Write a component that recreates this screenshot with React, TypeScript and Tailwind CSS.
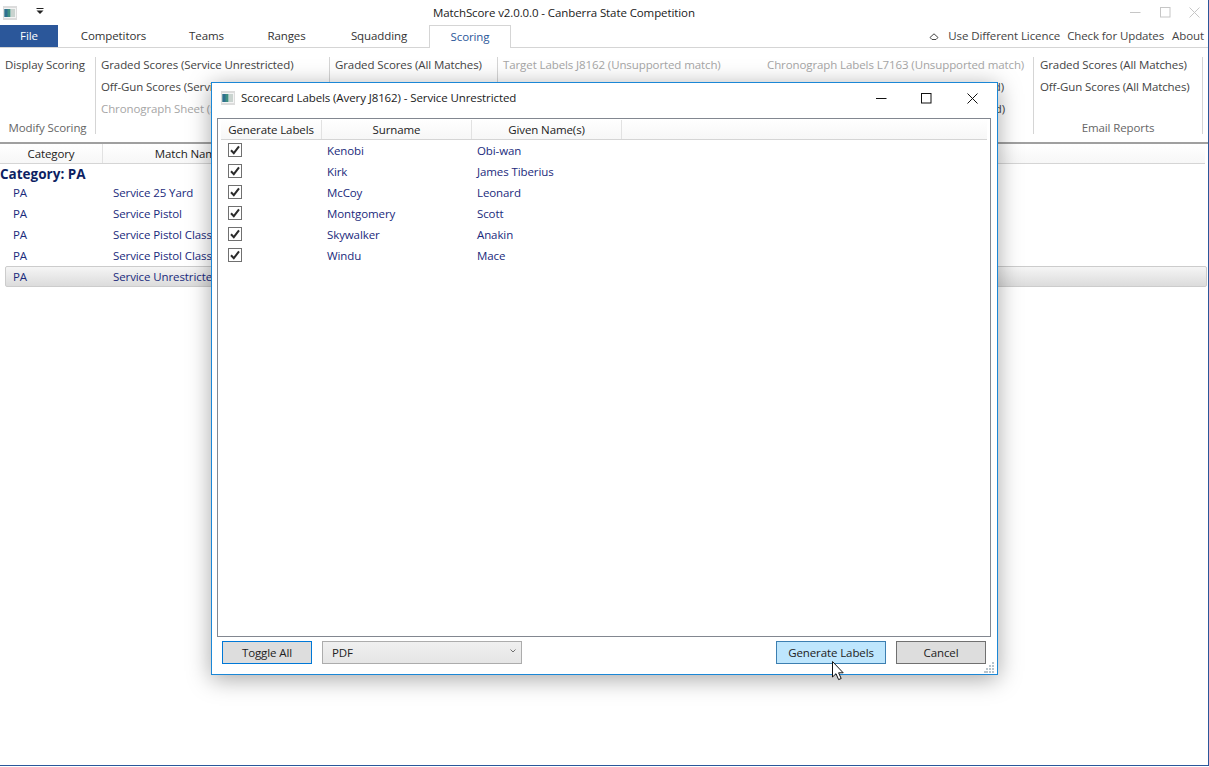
// App.tsx
const font = "font-['Open_Sans','Liberation_Sans',sans-serif]";

const matches = [
  "Service 25 Yard",
  "Service Pistol",
  "Service Pistol Class 1",
  "Service Pistol Class 2",
  "Service Unrestricted",
];

const people = [
  ["Kenobi", "Obi-wan"],
  ["Kirk", "James Tiberius"],
  ["McCoy", "Leonard"],
  ["Montgomery", "Scott"],
  ["Skywalker", "Anakin"],
  ["Windu", "Mace"],
];

function AppIcon() {
  return (
    <svg width="14" height="14" viewBox="0 0 14 14" className="shrink-0">
      <rect width="14" height="14" fill="#dcdcdc" />
      <rect x="1" y="2" width="12" height="10" fill="#f4f4f4" />
      <rect x="1.5" y="3" width="6" height="8" fill="#3f8f82" />
      <rect x="1.5" y="3" width="3" height="8" fill="#2f6f8f" />
      <rect x="8" y="3" width="4" height="8" fill="#c9d3cf" />
    </svg>
  );
}

function RibbonRow({ children, off }: { children: React.ReactNode; off?: boolean }) {
  return (
    <div className={`h-[22px] flex items-center whitespace-nowrap ${off ? "text-[#a6a6a6]" : "text-[#444444]"}`}>
      {children}
    </div>
  );
}

function Check() {
  return (
    <div className="w-[14px] h-[14px] border border-[#707070] bg-white flex items-center justify-center">
      <svg width="12" height="12" viewBox="0 0 12 12">
        <path d="M2 6.2 L4.8 9.2 L10 2.4" fill="none" stroke="#2b2b2b" strokeWidth="2" />
      </svg>
    </div>
  );
}

function WinButton({ kind, color }: { kind: "min" | "max" | "close"; color: string }) {
  return (
    <svg width="11" height="11" viewBox="0 0 11 11" className="shrink-0">
      {kind === "min" && <path d="M0 5.5H10.5" stroke={color} strokeWidth="1" />}
      {kind === "max" && <rect x="0.5" y="0.5" width="9.5" height="9.5" fill="none" stroke={color} />}
      {kind === "close" && <path d="M0.5 0.5L10.5 10.5M10.5 0.5L0.5 10.5" stroke={color} strokeWidth="1" />}
    </svg>
  );
}

function Dialog() {
  return (
    <div className="absolute left-[211px] top-[82px] w-[787px] h-[593px] bg-white border border-[#1b87d6] shadow-[0_4px_22px_rgba(0,0,0,0.35)] flex flex-col text-[#1f1f1f]">
      <div className="h-[35px] shrink-0 flex items-center pl-[9px] pb-[5px] text-[#1a1a1a]">
        <AppIcon />
        <span className="ml-[6px] whitespace-nowrap">Scorecard Labels (Avery J8162) - Service Unrestricted</span>
        <div className="ml-auto flex items-center">
          <WinButton kind="min" color="#111" />
          <div className="w-[34px]" />
          <WinButton kind="max" color="#111" />
          <div className="w-[35px]" />
          <WinButton kind="close" color="#111" />
          <div className="w-[19px]" />
        </div>
      </div>

      <div className="mx-[5px] mr-[6px] h-[519px] shrink-0 border border-[#828790] px-[3px] pr-[3px]">
        <div className="h-[21px] pt-px flex border-b border-[#d5d5d5] bg-gradient-to-b from-white to-[#f7f7f7] text-[#222222]">
          <div className="w-[101px] border-r border-[#e2e2e2] flex items-center justify-center">Generate Labels</div>
          <div className="w-[150px] border-r border-[#e2e2e2] flex items-center justify-center">Surname</div>
          <div className="w-[150px] border-r border-[#e2e2e2] flex items-center justify-center">Given Name(s)</div>
        </div>
        {people.map(([surname, given]) => (
          <div key={surname} className="h-[21px] flex items-center text-[#1a2a7c]">
            <div className="w-[101px] pl-[7px] -mt-[2px]">
              <Check />
            </div>
            <div className="w-[150px] pl-[5px]">{surname}</div>
            <div className="w-[150px] pl-[5px]">{given}</div>
          </div>
        ))}
      </div>

      <div className="mt-[4px] pl-[10px] pr-[11px] h-[23px] flex items-stretch text-[#222222]">
        <button className="w-[90px] bg-[#dddddd] border border-[#0078d7]">Toggle All</button>
        <div className="ml-[10px] w-[200px] border border-[#acacac] bg-gradient-to-b from-[#f0f0f0] to-[#e5e5e5] flex items-center pl-[9px] pr-[4px]">
          <span>PDF</span>
          <svg width="8" height="6" viewBox="0 0 8 6" className="ml-auto -mt-[3px]">
            <path d="M1.5 1.5L4 4L6.5 1.5" fill="none" stroke="#707070" strokeWidth="1" />
          </svg>
        </div>
        <button className="ml-auto w-[110px] bg-[#bee6fd] border border-[#3c7fb1]">Generate Labels</button>
        <button className="ml-[10px] w-[90px] bg-[#dddddd] border border-[#707070]">Cancel</button>
      </div>

      {/* resize grip */}
      <svg width="11" height="11" viewBox="0 0 11 11" className="absolute right-[2px] bottom-[1px]">
        {[[8, 0], [5, 3], [8, 3], [2, 6], [5, 6], [8, 6], [0, 9], [2, 9], [5, 9], [8, 9]].map(([x, y], i) => (
          <rect key={i} x={x} y={y} width="2" height="2" fill="#b8c4cc" />
        ))}
      </svg>
    </div>
  );
}

export default function App() {
  return (
    <div className={`relative w-[1209px] h-[767px] overflow-hidden bg-white text-[11.5px] tracking-[-0.1px] ${font}`}>
      <div className="h-[766px] border-r border-b border-[#2b579a] flex flex-col">
        {/* title bar */}
        <div className="h-[25px] shrink-0 flex items-center">
          <div className="w-[433px] flex items-center pl-[3px]">
            <AppIcon />
            <svg width="8" height="6" viewBox="0 0 8 6" className="ml-[19px] -mt-[3px]">
              <path d="M0.5 0.5H7.5" stroke="#222" />
              <path d="M0.5 2.5H7.5L4 6Z" fill="#222" />
            </svg>
          </div>
          <span className="text-[#1a1a1a] whitespace-nowrap">MatchScore v2.0.0.0 - Canberra State Competition</span>
          <div className="ml-auto flex items-center pr-[8px]">
            <WinButton kind="min" color="#c6c6c6" />
            <div className="w-[19px]" />
            <WinButton kind="max" color="#c6c6c6" />
            <div className="w-[18px]" />
            <WinButton kind="close" color="#c6c6c6" />
          </div>
        </div>

        {/* tabs */}
        <div className="h-[23px] shrink-0 flex items-stretch border-b border-[#d5d5d5]">
          <div className="w-[58px] h-[22px] bg-[#2b579a] text-white flex items-center justify-center">File</div>
          <div className="w-[111px] flex items-center justify-center text-[#333333]">Competitors</div>
          <div className="w-[75px] flex items-center justify-center text-[#333333]">Teams</div>
          <div className="w-[85px] flex items-center justify-center text-[#333333]">Ranges</div>
          <div className="w-[100px] flex items-center justify-center text-[#333333]">Squadding</div>
          <div className="w-[82px] h-[23px] bg-white border border-b-0 border-[#d5d5d5] flex items-center justify-center text-[#2b579a]">Scoring</div>
          <div className="ml-auto flex items-center pr-[4px] text-[#444444]">
            <svg width="10" height="7" viewBox="0 0 10 7" className="mr-[9px]">
              <path d="M1 4.5L5 0.8L9 4.5L7 6.5H3Z" fill="none" stroke="#444" strokeWidth="1" />
            </svg>
            <span>Use Different Licence</span>
            <span className="ml-[7px]">Check for Updates</span>
            <span className="ml-[8px]">About</span>
          </div>
        </div>

        {/* ribbon */}
        <div className="h-[96px] shrink-0 flex pt-[9px] border-b-2 border-[#a0a0a0]">
          <div className="w-[96px] h-[77px] border-r border-[#d5d5d5] pl-[5px]">
            <div className="-mt-[3px]">
              <RibbonRow>Display Scoring</RibbonRow>
              <div className="h-[42px]" />
              <div className="h-[19px] -ml-[5px] flex items-center justify-center text-[#666666]">Modify Scoring</div>
            </div>
          </div>
          <div className="w-[234px] h-[77px] border-r border-[#d5d5d5] pl-[5px]">
            <div className="-mt-[3px]">
              <RibbonRow>Graded Scores (Service Unrestricted)</RibbonRow>
              <RibbonRow>Off-Gun Scores (Service Unrestricted)</RibbonRow>
              <RibbonRow off>Chronograph Sheet (Service Unrestricted)</RibbonRow>
            </div>
          </div>
          <div className="w-[168px] h-[77px] border-r border-[#d5d5d5] pl-[5px]">
            <div className="-mt-[3px]">
              <RibbonRow>Graded Scores (All Matches)</RibbonRow>
            </div>
          </div>
          <div className="w-[536px] h-[77px] border-r border-[#d5d5d5] pl-[5px] flex">
            <div className="-mt-[3px] w-[264px]">
              <RibbonRow off>Target Labels J8162 (Unsupported match)</RibbonRow>
            </div>
            <div className="-mt-[3px] w-[258px]">
              <RibbonRow off>Chronograph Labels L7163 (Unsupported match)</RibbonRow>
              <div className="h-[22px] pr-[21px] flex items-center justify-end text-[#444444] whitespace-nowrap">(Service Unrestricted)</div>
              <div className="h-[22px] pr-[20px] flex items-center justify-end text-[#444444] whitespace-nowrap">(Service Unrestricted)</div>
            </div>
          </div>
          <div className="w-[169px] h-[77px] border-r border-[#d5d5d5] pl-[6px]">
            <div className="-mt-[3px]">
              <RibbonRow>Graded Scores (All Matches)</RibbonRow>
              <RibbonRow>Off-Gun Scores (All Matches)</RibbonRow>
              <div className="h-[20px]" />
              <div className="h-[19px] -ml-[6px] flex items-center justify-center text-[#666666]">Email Reports</div>
            </div>
          </div>
        </div>

        {/* match grid */}
        <div className="h-[20px] shrink-0 mr-[3px] flex border-b border-[#d5d5d5] bg-gradient-to-b from-white to-[#f7f7f7] text-[#222222]">
          <div className="w-[103px] border-r border-[#e2e2e2] flex items-center justify-center">Category</div>
          <div className="w-[172px] border-r border-[#e2e2e2] flex items-center justify-center">Match Name</div>
        </div>
        <div className="h-[18px] pt-[2px] shrink-0 flex items-center font-bold text-[13.5px] tracking-normal text-[#0d1f63]">Category: PA</div>
        {matches.map((match, i) => (
          <div
            key={match}
            className={`h-[21px] shrink-0 mr-[1px] ml-[5px] flex items-center text-[#1a2a7c] ${
              i === 4 ? "border border-[#cccccc] rounded-[2px] bg-gradient-to-b from-[#f5f5f5] to-[#dcdcdc] pl-[7px]" : "pl-[8px]"
            }`}
          >
            <div className="w-[100px]">PA</div>
            <div className="whitespace-nowrap">{match}</div>
          </div>
        ))}
      </div>

      <Dialog />

      {/* mouse cursor */}
      <svg width="14" height="20" viewBox="0 0 14 20" className="absolute left-[832px] top-[661px]">
        <path d="M0.5 0.5V16L4 12.7L6.6 18.6L9.2 17.5L6.6 11.8H11.2Z" fill="white" stroke="#111" strokeWidth="1" />
      </svg>
    </div>
  );
}
